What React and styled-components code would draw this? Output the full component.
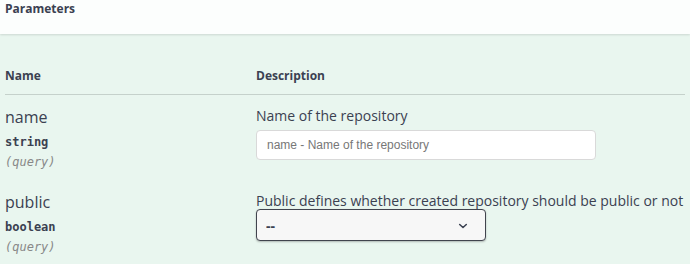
import styled, { createGlobalStyle } from 'styled-components'

const GlobalStyle = createGlobalStyle`
  html, body {
    margin: 0;
    padding: 0;
    background: #e9f6ef;
  }
  body {
    font-family: "Open Sans", "Liberation Sans", sans-serif;
    color: #3b4151;
  }
`

const params = [
  {
    name: 'name',
    type: 'string',
    location: '(query)',
    description: 'Name of the repository',
    kind: 'input',
    placeholder: 'name - Name of the repository',
  },
  {
    name: 'public',
    type: 'boolean',
    location: '(query)',
    description: 'Public defines whether created repository should be public or not',
    kind: 'select',
  },
]

export default function App() {
  return (
    <>
      <GlobalStyle />
      <Section>
        <Header>
          <Title>Parameters</Title>
        </Header>
        <Table>
          <HeadRow>
            <HeadCell>Name</HeadCell>
            <HeadCell>Description</HeadCell>
          </HeadRow>
          {params.map(p => (
            <Row key={p.name}>
              <NameCell>
                <ParamName>{p.name}</ParamName>
                <ParamType>{p.type}</ParamType>
                <ParamIn>{p.location}</ParamIn>
              </NameCell>
              <DescCell>
                <DescText>{p.description}</DescText>
                {p.kind === 'input' ? (
                  <TextInput placeholder={p.placeholder} />
                ) : (
                  <SelectWrap>
                    <Select defaultValue="">
                      <option value="">--</option>
                      <option value="true">true</option>
                      <option value="false">false</option>
                    </Select>
                    <Chevron viewBox="0 0 20 20">
                      <path d="M4.5 7.5 L10 12.5 L15.5 7.5" />
                    </Chevron>
                  </SelectWrap>
                )}
              </DescCell>
            </Row>
          ))}
        </Table>
      </Section>
    </>
  )
}

const Section = styled.div`
  width: 690px;
  height: 264px;
  overflow: hidden;
  background: #e9f6ef;
`

const Header = styled.div`
  height: 34px;
  box-sizing: border-box;
  padding: 1px 5px 0;
  background: rgba(255, 255, 255, 0.85);
  box-shadow: 0 1px 2px rgba(0, 0, 0, 0.12);
`

const Title = styled.h4`
  margin: 0;
  font-size: 12px;
  line-height: 16px;
  font-weight: 700;
`

const Table = styled.div`
  padding: 0 5px;
`

const HeadRow = styled.div`
  display: grid;
  grid-template-columns: 251px 1fr;
  padding: 34px 0 11px;
  border-bottom: 1px solid #c5d1cb;
`

const HeadCell = styled.div`
  font-size: 12px;
  line-height: 15px;
  font-weight: 700;
`

const Row = styled.div`
  display: grid;
  grid-template-columns: 251px 1fr;
  padding: 12px 0 8px;
`

const NameCell = styled.div`
  display: flex;
  flex-direction: column;
`

const ParamName = styled.div`
  font-size: 16px;
  line-height: 20px;
`

const ParamType = styled.div`
  padding-top: 5px;
  font-family: "DejaVu Sans Mono", "Liberation Mono", monospace;
  font-size: 12px;
  line-height: 20px;
  font-weight: 700;
`

const ParamIn = styled.div`
  font-family: "DejaVu Sans Mono", "Liberation Mono", monospace;
  font-size: 12px;
  line-height: 20px;
  font-style: italic;
  color: #888;
`

const DescCell = styled.div`
  display: flex;
  flex-direction: column;
  align-items: flex-start;
`

const DescText = styled.p`
  margin: 0;
  font-size: 14px;
  line-height: 18px;
`

const TextInput = styled.input`
  box-sizing: border-box;
  width: 340px;
  height: 30px;
  margin-top: 5px;
  padding: 0 10px;
  border: 1px solid #d9d9d9;
  border-radius: 4px;
  background: #fff;
  font-family: "Liberation Sans", "Open Sans", sans-serif;
  font-size: 12px;
  color: #3b4151;
  outline: none;

  &::placeholder {
    color: #777;
  }
`

const SelectWrap = styled.div`
  position: relative;
  margin-top: -1px;
`

const Select = styled.select`
  box-sizing: border-box;
  width: 230px;
  height: 32px;
  padding: 0 9px;
  border: 1px solid #41444e;
  border-radius: 4px;
  background: #f7f7f7;
  box-shadow: 0 1px 2px rgba(0, 0, 0, 0.25);
  appearance: none;
  font-family: "Open Sans", "Liberation Sans", sans-serif;
  font-size: 14px;
  font-weight: 700;
  color: #3b4151;
  outline: none;
`

const Chevron = styled.svg`
  position: absolute;
  right: 17px;
  top: 11px;
  width: 12px;
  height: 12px;
  fill: none;
  stroke: #3b4151;
  stroke-width: 2.6;
  stroke-linecap: round;
  stroke-linejoin: round;
  pointer-events: none;
`
